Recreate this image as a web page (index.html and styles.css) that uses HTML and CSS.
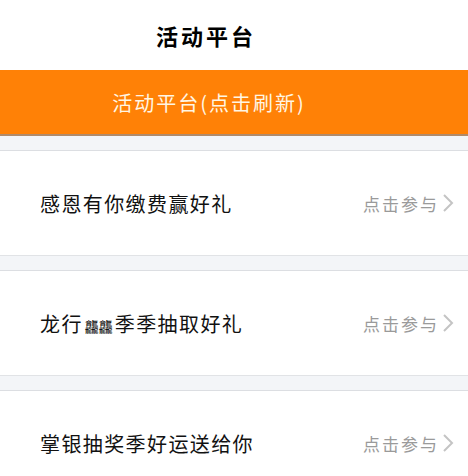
FILE: index.html
```html
<!DOCTYPE html>
<html lang="zh-CN">
<head>
  <meta charset="UTF-8">
  <meta name="viewport" content="width=device-width, initial-scale=1.0">
  <title>活动平台</title>
  <link rel="stylesheet" href="styles.css">
</head>
<body>
  <header class="topbar">
    <h1>活动平台</h1>
  </header>

  <div class="refresh-bar">活动平台(点击刷新)</div>

  <ul class="act-list">
    <li class="act-item">
      <span class="act-name">感恩有你缴费赢好礼</span>
      <span class="act-go">点击参与<svg class="chev" viewBox="0 0 12 20"><polyline points="2,2 10,10 2,18"/></svg></span>
    </li>
    <li class="act-item">
      <span class="act-name">龙行<span class="rare">龘龘</span>季季抽取好礼</span>
      <span class="act-go">点击参与<svg class="chev" viewBox="0 0 12 20"><polyline points="2,2 10,10 2,18"/></svg></span>
    </li>
    <li class="act-item">
      <span class="act-name">掌银抽奖季好运送给你</span>
      <span class="act-go">点击参与<svg class="chev" viewBox="0 0 12 20"><polyline points="2,2 10,10 2,18"/></svg></span>
    </li>
  </ul>
</body>
</html>
```

FILE: styles.css
```css
body {
  margin: 0;
  background: #ffffff;
  font-family: "Noto Sans CJK SC", "Noto Sans", sans-serif;
  color: #111;
  overflow: hidden;
}

/* 顶部标题 */
.topbar {
  height: 70px;
  display: flex;
  align-items: center;
  justify-content: center;
  padding-right: 56px;
  box-sizing: border-box;
}

.topbar h1 {
  margin: 0;
  font-size: 22px;
  font-weight: 700;
  letter-spacing: 3px;
  color: #000;
}

.refresh-bar {
  height: 64px;
  background: #ff8106;
  color: #fff6e4;
  font-size: 20px;
  display: flex;
  align-items: center;
  justify-content: center;
  padding-right: 50px;
  letter-spacing: 2px;
  border-bottom: 2px solid #b08a6a;
}

/* 活动列表 */
.act-list {
  list-style: none;
  margin: 0;
  padding: 14px 0 0;
  background: #f3f5f8;
  display: flex;
  flex-direction: column;
  gap: 14px;
}

.act-item {
  height: 104px;
  display: flex;
  align-items: center;
  justify-content: space-between;
  padding: 0 14px 0 40px;
  background: #fff;
  border-top: 1px solid #dcdee2;
  border-bottom: 1px solid #e1e3e6;
}

.act-name {
  font-size: 20px;
  letter-spacing: 1.4px;
  color: #111;
}

.rare {
  font-size: 14px;
  letter-spacing: 0;
  margin: 0 2px;
}

.act-go {
  display: flex;
  align-items: center;
  font-size: 17px;
  color: #9a9a9a;
  letter-spacing: 2px;
}

.chev {
  width: 12px;
  height: 20px;
  margin-left: 3px;
  fill: none;
  stroke: #c4c4c4;
  stroke-width: 2;
}
```
